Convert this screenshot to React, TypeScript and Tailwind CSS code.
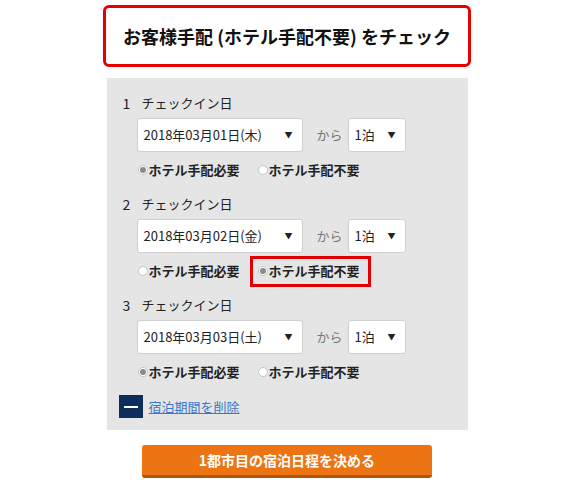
import React from "react";

const font = { fontFamily: '"Noto Sans CJK JP", "Noto Sans", sans-serif' };

function Radio({ checked, label }: { checked: boolean; label: string }) {
  return (
    <span className="flex items-center">
      <span className="w-[10px] h-[10px] rounded-full border border-[#c4c4c4] bg-white flex items-center justify-center">
        {checked && <span className="w-[6px] h-[6px] rounded-full bg-[#8a8a8a]" />}
      </span>
      <span className="ml-[1px] text-[13px] font-bold text-[#222] leading-[18px]">{label}</span>
    </span>
  );
}

function Row({ n, date, first, highlight }: { n: number; date: string; first: boolean; highlight?: boolean }) {
  return (
    <div className="flex flex-col">
      <div className="flex items-center h-[18px] text-[13px] text-[#222]">
        <span className="w-[19px] text-[14px]">{n}</span>
        <span>チェックイン日</span>
      </div>
      <div className="flex items-center mt-[6px] pl-[14px]">
        <div className="w-[166px] h-[34px] bg-white border border-[#cfcfcf] rounded-[3px] flex items-center justify-between pl-[6px] pr-[9px]">
          <span className="text-[13px] text-[#222]">{date}</span>
          <span className="text-[8px] text-[#222]">▼</span>
        </div>
        <span className="ml-[14px] text-[13px] text-[#777]">から</span>
        <div className="ml-[5px] w-[58px] h-[34px] bg-white border border-[#cfcfcf] rounded-[3px] flex items-center justify-between pl-[6px] pr-[9px]">
          <span className="text-[13px] text-[#222]">1泊</span>
          <span className="text-[8px] text-[#222]">▼</span>
        </div>
      </div>
      <div className="flex items-center mt-[9px] pl-[15px] h-[18px]">
        <Radio checked={first} label="ホテル手配必要" />
        <span className="relative ml-[18px]">
          <Radio checked={!first} label="ホテル手配不要" />
          {highlight && (
            <span className="absolute left-[-8px] right-[-11px] top-[-6px] bottom-[-7px] border-[3px] border-[#e00000]" />
          )}
        </span>
      </div>
    </div>
  );
}

export default function App() {
  return (
    <div className="w-[570px] h-[485px] bg-white flex flex-col items-center pl-[4px]" style={font}>
      <div className="mt-[5px] w-[368px] h-[62px] border-[3px] border-[#e60000] rounded-[6px] flex items-center justify-center">
        <span className="text-[18px] font-bold text-[#111]">お客様手配 (ホテル手配不要) をチェック</span>
      </div>
      <div className="mt-[11px] w-[361px] bg-[#e5e5e5] pt-[16px] pb-[12px] pl-[16px] flex flex-col gap-[16px]">
        <Row n={1} date="2018年03月01日(木)" first={true} />
        <Row n={2} date="2018年03月02日(金)" first={false} highlight />
        <Row n={3} date="2018年03月03日(土)" first={true} />
        <div className="flex items-center mt-[-2px]">
          <span className="ml-[-4px] w-[24px] h-[23px] bg-[#0c2d5e] flex items-center justify-center">
            <span className="w-[14px] h-[2px] bg-white" />
          </span>
          <a href="#" className="ml-[6px] text-[13px] text-[#3a78c9] underline">宿泊期間を削除</a>
        </div>
      </div>
      <div className="mt-[15px] w-[290px] h-[33px] bg-[#ec7412] border-b-[3px] border-[#b05405] rounded-[3px] flex items-center justify-center">
        <span className="text-[14px] font-bold text-white">1都市目の宿泊日程を決める</span>
      </div>
    </div>
  );
}
